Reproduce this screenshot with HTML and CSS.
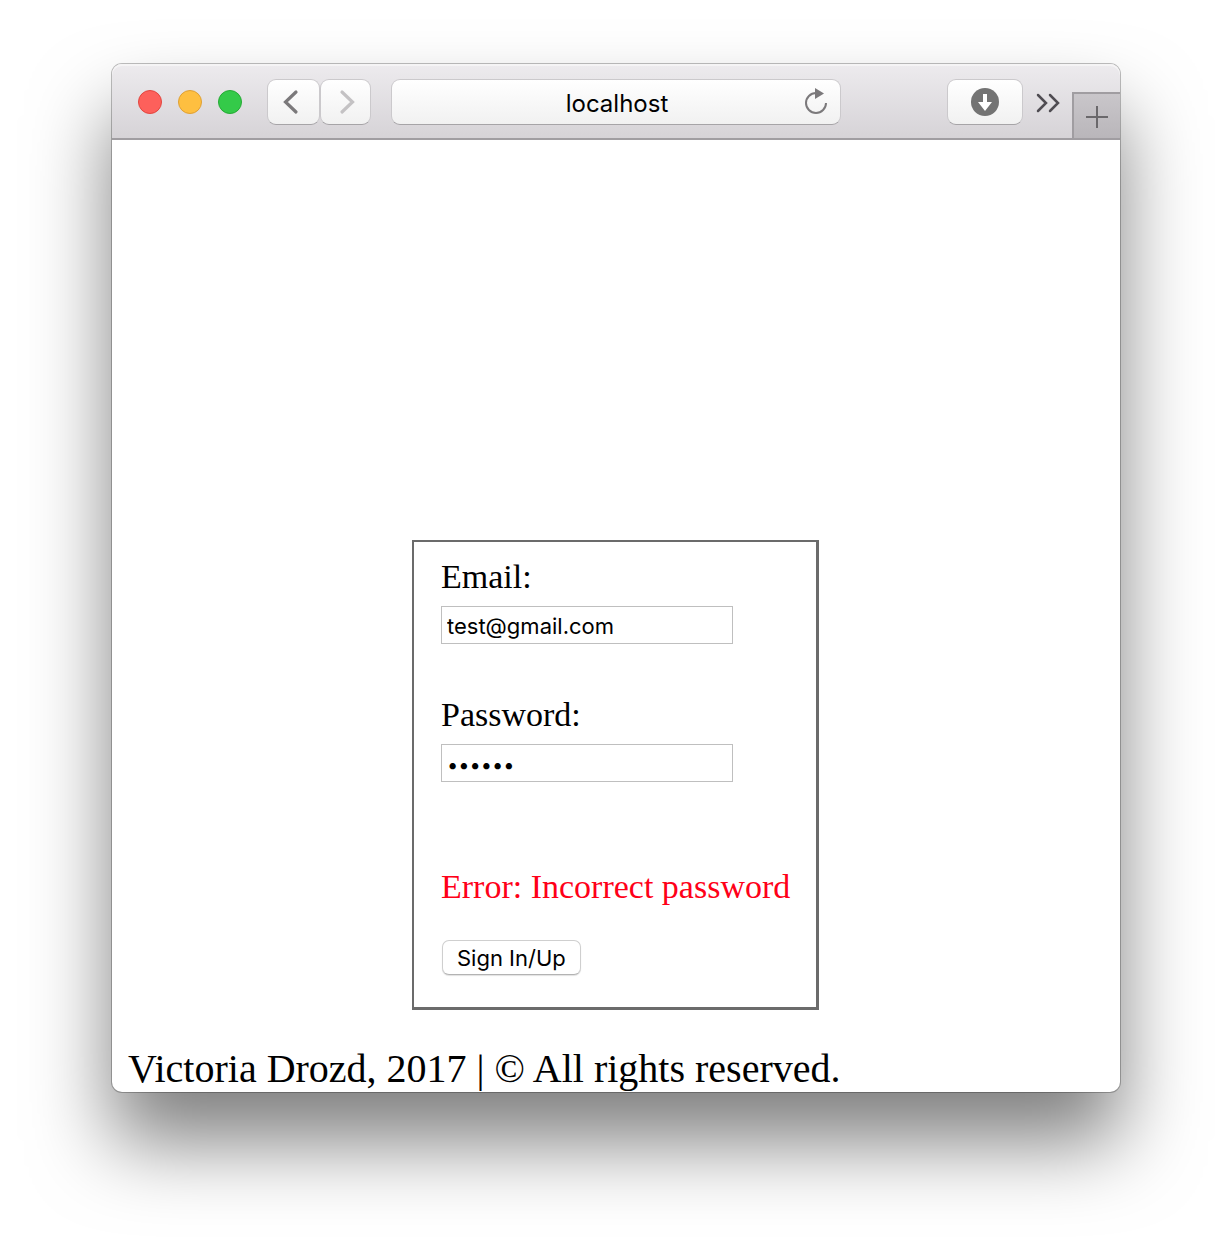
FILE: index.html
```html
<!DOCTYPE html>
<html lang="en">
<head>
<meta charset="utf-8">
<title>Sign In</title>
<link rel="stylesheet" href="styles.css">
</head>
<body>
<div class="window">
  <header class="toolbar">
    <div class="lights">
      <button class="light light-close" aria-label="Close"></button>
      <button class="light light-minimize" aria-label="Minimize"></button>
      <button class="light light-zoom" aria-label="Zoom"></button>
    </div>
    <nav class="history">
      <button class="tool tool-back" aria-label="Back">
        <svg width="24" height="28" viewBox="0 0 24 28"><path d="M17 4 6.500 14 17 24" fill="none" stroke="#7b797b" stroke-width="3.200" stroke-linecap="round" stroke-linejoin="miter"/></svg>
      </button>
      <button class="tool tool-forward" aria-label="Forward" disabled>
        <svg width="24" height="28" viewBox="0 0 24 28"><path d="M8 4 18.500 14 8 24" fill="none" stroke="#c4c2c4" stroke-width="3.200" stroke-linecap="round" stroke-linejoin="miter"/></svg>
      </button>
    </nav>
    <div class="address">
      <input class="address-input" type="text" value="localhost" aria-label="Address">
      <button class="reload" aria-label="Reload">
        <svg width="28" height="32" viewBox="0 0 28 32"><path d="M24 17A10 10 0 1 1 14 7" fill="none" stroke="#7b797b" stroke-width="2"/><path d="M13 2 22 7.500 13 13Z" fill="#7b797b"/></svg>
      </button>
    </div>
    <div class="actions">
      <button class="tool tool-download" aria-label="Downloads">
        <svg width="28" height="28" viewBox="0 0 28 28"><circle cx="14" cy="14" r="14" fill="#737373"/><path d="M12 6h4v8h5l-7 9-7-9h5Z" fill="#fff"/></svg>
      </button>
      <button class="more" aria-label="More tools">
        <svg width="26" height="22" viewBox="0 0 26 22"><path d="M3 3 11 11 3 19M15 3 23 11 15 19" fill="none" stroke="#4f4c52" stroke-width="2.500" stroke-linecap="round"/></svg>
      </button>
      <button class="new-tab" aria-label="New tab">
        <svg width="22" height="22" viewBox="0 0 22 22"><path d="M11 0V22M0 11H22" fill="none" stroke="#6a686b" stroke-width="2"/></svg>
      </button>
    </div>
  </header>
  <main class="page">
    <form class="login">
      <div class="field">
        <label class="label" for="email">Email:</label>
        <input class="input" id="email" type="email" value="test@gmail.com">
      </div>
      <div class="field">
        <label class="label" for="password">Password:</label>
        <input class="input input-password" id="password" type="password" value="secret">
      </div>
      <p class="error" role="alert">Error: Incorrect password</p>
      <button class="submit" type="button">Sign In/Up</button>
    </form>
    <footer class="footer">Victoria Drozd, 2017 | © All rights reserved.</footer>
  </main>
</div>
</body>
</html>
```
FILE: styles.css
```css
* {
  box-sizing: border-box;
}

body {
  margin: 0;
  padding: 64px 112px 160px;
  background: #fff;
  color: #000;
  font-family: "Liberation Serif", "Times New Roman", serif;
}

button,
input {
  margin: 0;
  padding: 0;
  border: 0;
  background: none;
  color: #000;
  font-family: Inter, "Open Sans", sans-serif;
}

svg {
  display: block;
}

.window {
  border-radius: 10px;
  background: #fff;
  box-shadow: 0 0 0 1px rgba(0, 0, 0, 0.25), 0 50px 80px rgba(0, 0, 0, 0.5);
}

.toolbar {
  display: flex;
  align-items: center;
  height: 76px;
  padding-top: 2px;
  padding-left: 26px;
  border-bottom: 2px solid #a09da1;
  border-radius: 10px 10px 0 0;
  background: linear-gradient(#edebee, #d6d3d7);
  box-shadow: inset 0 2px 0 #f5f4f5;
}

.lights {
  display: flex;
  gap: 16px;
}

.light {
  width: 24px;
  height: 24px;
  border: 1px solid;
  border-radius: 50%;
}

.light-close {
  border-color: #e2453f;
  background: #fd605b;
}

.light-minimize {
  border-color: #dfa034;
  background: #febf40;
}

.light-zoom {
  border-color: #26aa35;
  background: #34ca49;
}

.history {
  display: flex;
  margin-left: 25px;
}

.tool,
.address {
  display: flex;
  align-items: center;
  justify-content: center;
  height: 46px;
  border: 1px solid #cbc9cc;
  border-bottom-color: #a6a4a7;
  border-radius: 9px;
  background: linear-gradient(#fff, #f1f1f1);
}

.tool-back {
  width: 53px;
  padding-right: 6px;
}

.tool-forward {
  width: 51px;
}

.address {
  position: relative;
  flex: 0 1 450px;
  margin-left: 20px;
}

.address-input {
  width: 100%;
  height: 100%;
  padding: 2px 0 0 2px;
  font-size: 24px;
  text-align: center;
}

.reload {
  position: absolute;
  top: 6px;
  right: 10px;
}

.actions {
  display: flex;
  align-items: center;
  align-self: stretch;
  margin-left: auto;
}

.tool-download {
  width: 76px;
}

.more {
  padding-top: 2px;
  margin: 0 11px 0 12px;
}

.new-tab {
  display: flex;
  align-items: center;
  justify-content: center;
  align-self: flex-end;
  width: 48px;
  height: 46px;
  padding-top: 2px;
  border-top: 2px solid #a09da1;
  border-left: 2px solid #a09da1;
  background: linear-gradient(#c9c6ca, #b9b6ba);
}

.page {
  padding: 400px 17px 0 16px;
}

.login {
  width: 407px;
  max-width: 100%;
  margin: 0 auto;
  padding: 14px 24px 32px 27px;
  border: solid #6b6b6b;
  border-width: 2px 3px 3px 2px;
}

.field {
  margin-bottom: 50px;
}

.label {
  display: block;
  margin-bottom: 8px;
  font-size: 34px;
  line-height: 42px;
}

.input {
  display: block;
  width: 292px;
  height: 38px;
  padding: 2px 5px 0;
  border: 1px solid #bfbfbf;
  background: #fff;
  font-size: 22px;
}

.input-password {
  padding-top: 4px;
  font-size: 20px;
}

.error {
  margin: 84px 0 32px;
  color: #ff0018;
  font-size: 34px;
  line-height: 42px;
  white-space: nowrap;
}

.submit {
  display: block;
  height: 35px;
  margin-left: 1px;
  padding: 0 14px;
  border: 1px solid #cfcfcf;
  border-bottom-color: #b3b3b3;
  border-radius: 7px;
  background: #fff;
  box-shadow: 0 1px 1px rgba(0, 0, 0, 0.12);
  font-size: 22px;
}

.footer {
  padding-top: 36px;
  font-size: 40px;
  line-height: 46px;
}
```
